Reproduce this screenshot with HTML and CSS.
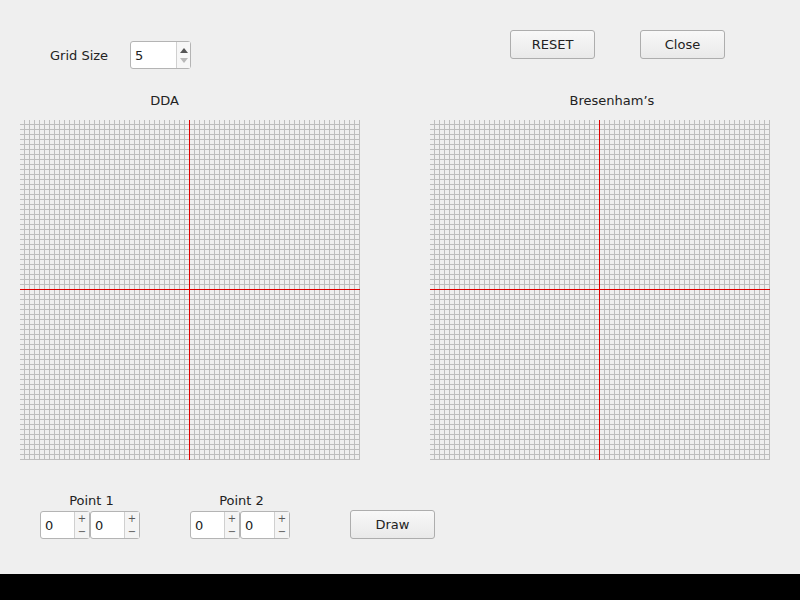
FILE: index.html
```html
<!DOCTYPE html>
<html>
<head>
<meta charset="utf-8">
<link rel="stylesheet" href="styles.css">
</head>
<body>
<div class="app">
  <div class="top">
    <div class="gridsize">
      <span class="gs-label">Grid Size</span>
      <div class="spin big">
        <div class="val">5</div>
        <div class="arrows">
          <span class="up"></span>
          <span class="down"></span>
        </div>
      </div>
    </div>
    <div class="buttons">
      <button class="btn">RESET</button>
      <button class="btn">Close</button>
    </div>
  </div>
  <div class="titles">
    <div class="title t1">DDA</div>
    <div class="title t2">Bresenham’s</div>
  </div>
  <div class="grids">
    <svg class="grid" width="340" height="340" viewBox="0 0 340 340">
      <defs>
        <pattern id="g1" x="0" y="0" width="5" height="5" patternUnits="userSpaceOnUse">
          <rect x="4" y="0" width="1" height="5" fill="#bdbdbd"/>
          <rect x="0" y="4" width="5" height="1" fill="#bdbdbd"/>
        </pattern>
      </defs>
      <rect x="0" y="0" width="340" height="340" fill="url(#g1)"/>
      <rect x="169" y="0" width="1" height="340" fill="#e00000"/>
      <rect x="0" y="169" width="340" height="1" fill="#e00000"/>
    </svg>
    <svg class="grid" width="340" height="340" viewBox="0 0 340 340">
      <defs>
        <pattern id="g2" x="0" y="0" width="5" height="5" patternUnits="userSpaceOnUse">
          <rect x="4" y="0" width="1" height="5" fill="#bdbdbd"/>
          <rect x="0" y="4" width="5" height="1" fill="#bdbdbd"/>
        </pattern>
      </defs>
      <rect x="0" y="0" width="340" height="340" fill="url(#g2)"/>
      <rect x="169" y="0" width="1" height="340" fill="#e00000"/>
      <rect x="0" y="169" width="340" height="1" fill="#e00000"/>
    </svg>
  </div>
  <div class="bottom">
    <div class="point">
      <div class="p-label">Point 1</div>
      <div class="pair">
        <div class="spin small"><div class="val">0</div><div class="pm"><span>+</span><span>−</span></div></div>
        <div class="spin small"><div class="val">0</div><div class="pm"><span>+</span><span>−</span></div></div>
      </div>
    </div>
    <div class="point">
      <div class="p-label">Point 2</div>
      <div class="pair">
        <div class="spin small"><div class="val">0</div><div class="pm"><span>+</span><span>−</span></div></div>
        <div class="spin small"><div class="val">0</div><div class="pm"><span>+</span><span>−</span></div></div>
      </div>
    </div>
    <button class="btn draw">Draw</button>
  </div>
  <div class="footer"></div>
</div>
</body>
</html>
```
FILE: styles.css
```css
* { box-sizing: border-box; }
html, body {
  margin: 0;
  padding: 0;
  background: #efefef;
}
body {
  font-family: "DejaVu Sans", sans-serif;
  font-size: 13px;
  color: #222;
}
.app {
  width: 800px;
  height: 600px;
  display: flex;
  flex-direction: column;
}
.top {
  height: 86px;
  display: flex;
  align-items: flex-start;
  padding-left: 50px;
}
.gridsize {
  margin-top: 41px;
  display: flex;
  align-items: center;
}
.gs-label {
  width: 80px;
}
.spin {
  display: flex;
  background: #fff;
  border: 1px solid #b4b4b4;
  border-radius: 3px;
}
.spin.big {
  width: 61px;
  height: 28px;
}
.spin .val {
  flex: 1;
  padding-left: 4px;
  display: flex;
  align-items: center;
}
.spin.big .arrows {
  width: 14px;
  border-left: 1px solid #d0d0d0;
  display: flex;
  flex-direction: column;
  align-items: center;
  justify-content: center;
  gap: 5px;
  background: #f7f7f7;
}
.up {
  width: 0; height: 0;
  border-left: 4px solid transparent;
  border-right: 4px solid transparent;
  border-bottom: 5px solid #555;
}
.down {
  width: 0; height: 0;
  border-left: 4px solid transparent;
  border-right: 4px solid transparent;
  border-top: 5px solid #b8b8b8;
}
.buttons {
  margin-top: 30px;
  margin-left: 319px;
  display: flex;
  gap: 45px;
}
.btn {
  width: 85px;
  height: 29px;
  font-family: "DejaVu Sans", sans-serif;
  font-size: 13px;
  color: #222;
  background: linear-gradient(#f8f8f8, #e9e9e9);
  border: 1px solid #adadad;
  border-radius: 3px;
  padding: 0;
}
.titles {
  height: 34px;
  display: flex;
  padding-top: 7px;
  line-height: 16px;
}
.title { text-align: center; }
.t1 { width: 329px; }
.t2 { width: 364px; margin-left: 101px; }
.grids {
  height: 340px;
  display: flex;
  padding-left: 20px;
  gap: 70px;
}
.grid { display: block; }
.bottom {
  height: 114px;
  display: flex;
  align-items: flex-start;
  padding-left: 40px;
  padding-top: 33px;
}
.point {
  display: flex;
  flex-direction: column;
  align-items: center;
  width: 100px;
  margin-right: 50px;
}
.p-label {
  line-height: 16px;
  height: 18px;
  padding-left: 3px;
}
.pair { display: flex; }
.spin.small {
  width: 50px;
  height: 28px;
}
.spin.small .val { padding-left: 4px; }
.pm {
  width: 15px;
  border-left: 1px solid #d0d0d0;
  display: flex;
  flex-direction: column;
  background: #f4f4f4;
  font-size: 10px;
  line-height: 13px;
  color: #555;
  text-align: center;
}
.pm span { flex: 1; }
.draw {
  margin-top: 17px;
  margin-left: 10px;
}
.footer {
  height: 26px;
  background: #000;
}
```
